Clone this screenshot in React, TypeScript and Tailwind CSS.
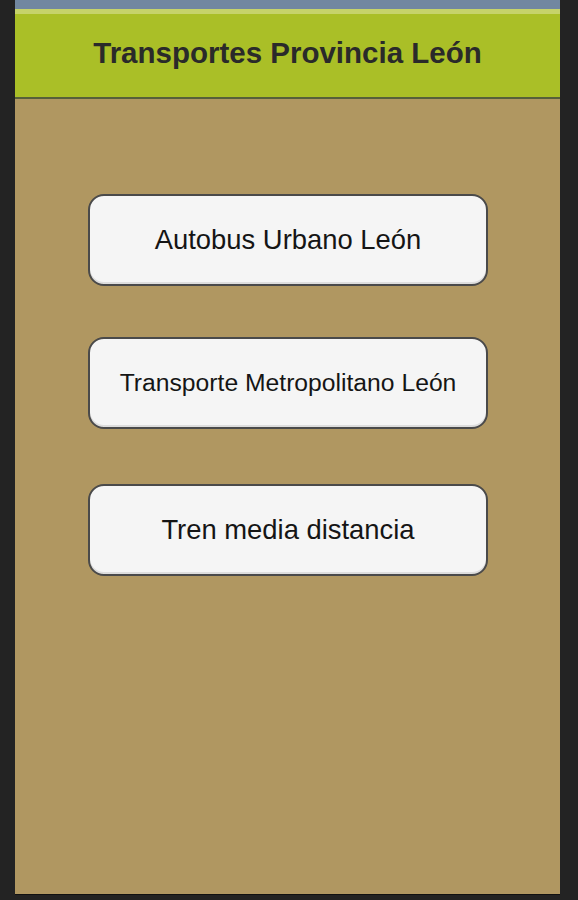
import React from 'react';

const options = [
  { label: 'Autobus Urbano León', size: 'text-[27.4px]', mt: 'mt-[95px]' },
  { label: 'Transporte Metropolitano León', size: 'text-[24.7px]', mt: 'mt-[51px]' },
  { label: 'Tren media distancia', size: 'text-[27.4px]', mt: 'mt-[55px]' },
];

export default function App() {
  return (
    <div className="w-[578px] h-[900px] bg-[#232323] flex pl-[15px] pr-[18px] font-['Liberation_Sans',Arial,sans-serif]">
      <div className="flex-1 h-[895px] flex flex-col border-b border-[#111]">
        {/* status strip */}
        <div className="h-[9px] bg-[#7187a0]" />
        <div className="h-[5px] bg-[#c6d36a]" />

        {/* title bar */}
        <div className="h-[85px] bg-[#aabf27] border-b-2 border-[#56603a] flex items-center justify-center pb-[5px]">
          <h1 className="text-[29.5px] font-bold text-[#2a2a2a]">
            Transportes Provincia León
          </h1>
        </div>

        {/* menu */}
        <div className="flex-1 bg-[#b09761] flex flex-col items-center pl-[1px]">
          {options.map((o) => (
            <button
              key={o.label}
              className={`${o.mt} w-[400px] h-[92px] rounded-[16px] border-2 border-[#4a4a4a] bg-[#f5f5f5] text-[#151515] ${o.size} flex items-center justify-center shadow-[inset_0_-2px_0_#ddd]`}
            >
              {o.label}
            </button>
          ))}
        </div>
      </div>
    </div>
  );
}
